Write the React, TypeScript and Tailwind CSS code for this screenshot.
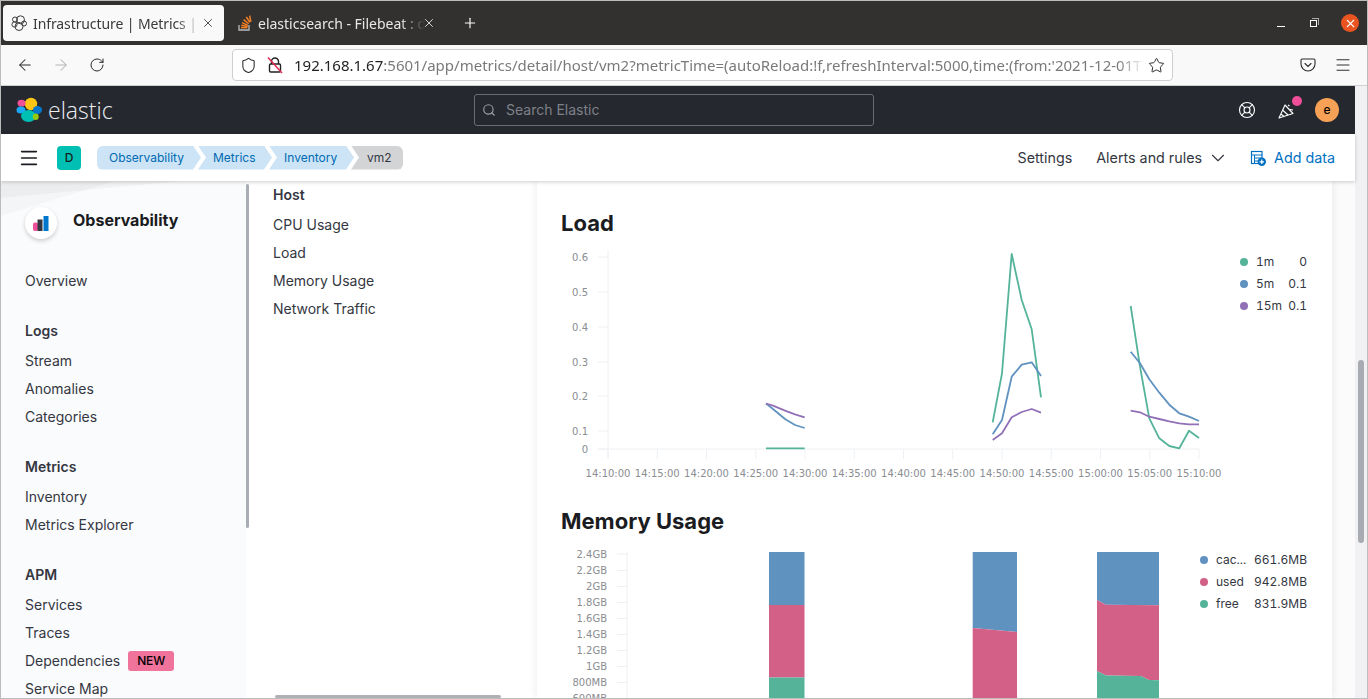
import React from "react";
import { ArrowLeft, ArrowRight, RotateCw, Shield, Star, Menu, Search, ChevronDown, LifeBuoy, Plus, X } from "lucide-react";

const green = "#54b399", blue = "#6092c0", purple = "#9170b8", pink = "#d36086";

const xLabels = ["14:10:00","14:15:00","14:20:00","14:25:00","14:30:00","14:35:00","14:40:00","14:45:00","14:50:00","14:55:00","15:00:00","15:05:00","15:10:00"];
const yLoad: [string, number][] = [["0.6",257],["0.5",292],["0.4",327],["0.3",362],["0.2",396],["0.1",431],["0",449]];
const yMem: [string, number][] = [["2.4GB",554],["2.2GB",570.5],["2GB",586.5],["1.8GB",602.5],["1.6GB",618.5],["1.4GB",634.5],["1.2GB",650.5],["1GB",666.5],["800MB",682.5],["600MB",698.5]];

const lines: [string, string][] = [
  [blue, "766,403.5 773,409 785,419 795,425 804.7,428"],
  [purple, "766,403.5 773,405.7 785,410.7 795,414.3 804.7,417.3"],
  [green, "766,448.3 804.7,448.3"],
  [green, "992.7,422.3 1002,373.3 1011.7,254 1021.7,300 1031.7,329.3 1041,397.3"],
  [blue, "992.7,434.3 1002,420 1011.7,376.7 1021.7,364.7 1031.7,362.3 1041,376"],
  [purple, "992.7,440 1002,433.3 1011.7,417.3 1021.7,412 1031.7,409 1041,412.7"],
  [green, "1130.7,306 1140,366.7 1149.3,418.3 1159.3,438.3 1169.3,446 1179.3,448.3 1189,430.7 1199,438"],
  [blue, "1130.7,351.7 1140,363.3 1149.3,379.3 1159.3,392.7 1169.3,404.7 1179.3,413.3 1189,416.7 1199,421"],
  [purple, "1130.7,410.7 1140,412.3 1149.3,416.7 1159.3,419 1169.3,421.3 1179.3,423.3 1189,424.3 1199,424.3"],
];

const areas: [string, string][] = [
  [blue, "769,552 804.5,552 804.5,605 769,605"],
  [pink, "769,605 804.5,605 804.5,677.5 769,677.5"],
  [green, "769,677.5 804.5,677.5 804.5,700 769,700"],
  [blue, "972.7,552 1017,552 1017,632 972.7,628"],
  [pink, "972.7,628 1017,632 1017,700 972.7,700"],
  [blue, "1097,552 1159,552 1159,605.3 1106,604.7 1097,600"],
  [pink, "1097,600 1106,604.7 1159,605.3 1159,680.3 1149,680 1141,676 1106,675.5 1097,671"],
  [green, "1097,671 1106,675.5 1141,676 1149,680 1159,680.3 1159,700 1097,700"],
];

function LoadChart() {
  const ticks = xLabels.map((_, i) => 608 + i * 49.25);
  return (
    <svg width={690} height={250} viewBox="537 240 690 250" className="block shrink-0">
      <line x1={608} y1={250} x2={608} y2={459} stroke="#eef0f3" strokeWidth={1} />
      {yLoad.map(([t, y]) => (
        <g key={t}>
          <line x1={598} x2={608} y1={y} y2={y} stroke="#eef0f3" />
          <text x={588} y={y + 3.5} textAnchor="end" fontSize={10} fill="#8a8d92" fontFamily="DejaVu Sans">{t}</text>
        </g>
      ))}
      <line x1={598} x2={1199} y1={449} y2={449} stroke="#eef0f3" />
      {ticks.map((x, i) => (
        <g key={i}>
          <line x1={x} x2={x} y1={449} y2={459} stroke="#eef0f3" />
          <text x={x} y={477} textAnchor="middle" fontSize={10} fill="#8a8d92" fontFamily="DejaVu Sans">{xLabels[i]}</text>
        </g>
      ))}
      {lines.map(([c, p], i) => (
        <polyline key={i} points={p} fill="none" stroke={c} strokeWidth={1.8} strokeLinejoin="round" />
      ))}
    </svg>
  );
}

function MemoryChart() {
  return (
    <svg width={660} height={158} viewBox="537 540 660 158" className="block shrink-0">
      <line x1={627} y1={552} x2={627} y2={700} stroke="#eef0f3" />
      {yMem.map(([t, y]) => (
        <g key={t}>
          <line x1={617} x2={627} y1={y} y2={y} stroke="#eef0f3" />
          <text x={607} y={y + 3.5} textAnchor="end" fontSize={10} fill="#8a8d92" fontFamily="DejaVu Sans">{t}</text>
        </g>
      ))}
      {areas.map(([c, p], i) => (
        <polygon key={i} points={p} fill={c} />
      ))}
    </svg>
  );
}

function Legend({ rows, className }: { rows: [string, string, string][]; className: string }) {
  return (
    <div className={className}>
      {rows.map(([c, l, v]) => (
        <div key={l} className="flex h-[22px] items-center text-xs tabular-nums text-[#343741]">
          <span className="h-2 w-2 shrink-0 rounded-full" style={{ backgroundColor: c }} />
          <span className="ml-2">{l}</span>
          <span className="ml-auto">{v}</span>
        </div>
      ))}
    </div>
  );
}

function NavGroup({ title, items }: { title?: string; items: string[] }) {
  return (
    <div className="mb-[22px]">
      {title && <div className="mb-[2px] flex h-[28px] items-center text-sm font-semibold text-[#343741]">{title}</div>}
      {items.map((i) => (
        <div key={i} className="flex h-[28px] items-center text-sm text-[#343741]">
          {i}
          {i === "Dependencies" && (
            <span className="ml-[8px] flex h-[20px] items-center rounded-[3px] bg-[#f0739b] px-[9px] text-xs font-medium tracking-[-0.2px] text-black">NEW</span>
          )}
        </div>
      ))}
    </div>
  );
}

function Crumb({ label, cls, text }: { label: string; cls: string; text: string }) {
  return <div className={`flex h-6 shrink-0 items-center text-xs ${cls} ${text}`}>{label}</div>;
}

function ElasticLogo() {
  return (
    <svg width={26} height={26} viewBox="0 0 26 26" className="shrink-0">
      <circle cx={15} cy={7} r={6.2} fill="#fec514" />
      <ellipse cx={5.5} cy={6.2} rx={4} ry={3.4} fill="#f04e98" />
      <ellipse cx={5} cy={13} rx={4.5} ry={3.6} fill="#1ba9f5" />
      <ellipse cx={12.5} cy={19} rx={7.5} ry={6} fill="#00bfb3" />
      <ellipse cx={21.5} cy={13} rx={4.6} ry={4} fill="#0077cc" />
      <ellipse cx={19.7} cy={19.8} rx={3} ry={3.2} fill="#93c90e" />
    </svg>
  );
}

function TabFavicon() {
  return (
    <svg width={16} height={16} viewBox="0 0 16 16" fill="none" stroke="#3b3b3b" strokeWidth={1} className="shrink-0">
      <circle cx={9.5} cy={4.8} r={4} />
      <circle cx={4} cy={4.5} r={2.5} />
      <circle cx={3.5} cy={9.5} r={2.6} />
      <circle cx={8} cy={11.5} r={4} />
      <circle cx={13} cy={8.5} r={2.5} />
    </svg>
  );
}

function StackIcon() {
  return (
    <svg width={14} height={16} viewBox="0 0 14 16" fill="none" className="shrink-0">
      <path d="M1 10v5h10v-5" stroke="#bcbbbb" strokeWidth={1.3} />
      <g stroke="#f48024" strokeWidth={1.5}>
        <path d="M3 12.6h6.4" />
        <path d="M3.3 10.2l6.3 1.3" />
        <path d="M4 7.6l5.9 2.8" />
        <path d="M5.6 4.6l5 4.2" />
        <path d="M8.3 2l3.6 5.2" />
        <path d="M11.7 0.6l1.1 6.2" />
      </g>
    </svg>
  );
}

function LockIcon() {
  return (
    <svg width={18} height={18} viewBox="0 0 18 18" fill="none" className="shrink-0">
      <path d="M5.5 8V5.5a3.5 3.5 0 0 1 7 0V8" stroke="#222" strokeWidth={1.4} />
      <rect x={3.5} y={8} width={11} height={8} rx={1.2} stroke="#222" strokeWidth={1.4} />
      <path d="M2 1.5L16 17" stroke="#e22850" strokeWidth={1.5} />
    </svg>
  );
}

function PocketIcon() {
  return (
    <svg width={16} height={16} viewBox="0 0 16 16" fill="none" stroke="#2b2b2b" strokeWidth={1.1} className="shrink-0">
      <path d="M2.2 2h11.6c.7 0 1.2.5 1.2 1.2V7a7 7 0 0 1-14 0V3.2C1 2.5 1.500 2 2.200 2z" />
      <path d="M5 6.500l3 3 3-3" strokeLinecap="round" />
    </svg>
  );
}

function CheerIcon() {
  return (
    <svg width={20} height={20} viewBox="0 0 20 20" fill="none" stroke="#fff" strokeWidth={1.1} className="shrink-0">
      <path d="M8 5L2 18l14-4.500z" strokeLinejoin="round" />
      <path d="M5.500 10l5.500 5M4 14l3 2.500M11 5l1.500 1M13 9.500l3 .5" />
    </svg>
  );
}

function AddDataIcon() {
  return (
    <svg width={16} height={16} viewBox="0 0 16 16" fill="none" className="shrink-0">
      <rect x={1.500} y={1.500} width={10.500} height={12} stroke="#0071c2" strokeWidth={1.200} />
      <path d="M1.500 5h10.500M4.500 5v8.500M4.500 8h7M4.500 11h4" stroke="#0071c2" strokeWidth={1} />
      <circle cx={11.800} cy={11.800} r={4.200} fill="#0071c2" />
      <path d="M11.800 9.600v4.400M9.600 11.800h4.400" stroke="#fff" strokeWidth={1.200} />
    </svg>
  );
}

function ObsIcon() {
  return (
    <svg width={16} height={16} viewBox="0 0 16 16" className="shrink-0">
      <rect x={0} y={7.500} width={5} height={8.500} rx={2} fill="#f04e98" />
      <rect x={4.500} y={4.500} width={5} height={11.500} fill="#343741" />
      <rect x={10.500} y={1} width={5} height={15} fill="#0077cc" />
    </svg>
  );
}

export default function App() {
  return (
    <div className="flex h-[699px] w-full flex-col overflow-hidden border border-[#bcbcbc] bg-white [font-family:Inter,sans-serif]">
      {/* browser tabs */}
      <div className="relative flex h-[44px] shrink-0 items-center bg-[#333130] pl-[2px] [font-family:'Noto_Sans',sans-serif] text-[14px]">
        <div className="flex h-[36px] w-[221px] shrink-0 items-center rounded-[4px] bg-[#f9f9fa] pl-[8px] text-[#3a3a3a]">
          <TabFavicon />
          <span className="ml-[6px] w-[168px] overflow-hidden whitespace-nowrap tracking-[-0.1px] [mask-image:linear-gradient(to_right,black_85%,transparent)]">Infrastructure | Metrics | vm2</span>
          <X size={14} strokeWidth={1.500} className="shrink-0" />
        </div>
        <div className="flex h-[36px] w-[228px] shrink-0 items-center pl-[14px] text-[#e8e8e8]">
          <StackIcon />
          <span className="ml-[6px] w-[167px] overflow-hidden whitespace-nowrap [mask-image:linear-gradient(to_right,white_85%,transparent)]">elasticsearch - Filebeat : data</span>
          <X size={14} strokeWidth={1.500} className="ml-[-3px] shrink-0 text-[#eee]" />
        </div>
        <Plus size={16} strokeWidth={1.700} className="ml-[10px] text-white" />
        <div className="ml-auto mr-[8px] flex items-center">
          <span className="h-[1px] w-[8px] translate-y-[3px] bg-white" />
          <span className="relative ml-[25px] h-[7px] w-[7px] border border-white">
            <span className="absolute left-[1px] top-[-3px] h-[7px] w-[7px] border-r border-t border-[#aaa]" />
          </span>
          <span className="ml-[24px] flex h-[18px] w-[18px] items-center justify-center rounded-full bg-[#e95420]">
            <X size={13} strokeWidth={2} className="text-white" />
          </span>
        </div>
      </div>
      {/* toolbar */}
      <div className="flex h-[41px] shrink-0 items-center border-b border-[#cfcfd0] bg-[#f9f9fa] text-[#2b2b2b]">
        <ArrowLeft size={18} strokeWidth={1.400} className="ml-[15px] shrink-0" />
        <ArrowRight size={18} strokeWidth={1.400} className="ml-[18px] shrink-0 text-[#b5b5b5]" />
        <RotateCw size={16} strokeWidth={1.500} className="ml-[19px] shrink-0" />
        <div className="ml-[127px] flex h-[32px] w-[941px] shrink-0 items-center rounded-[4px] border border-[#cfcfd0] bg-white pl-[6px]">
          <Shield size={17} strokeWidth={1.500} className="ml-[1px] shrink-0" />
          <div className="ml-[9px]"><LockIcon /></div>
          <div className="ml-[10px] w-[850px] shrink-0 overflow-hidden whitespace-nowrap text-[15px] text-[#7a7a7a] [font-family:'Noto_Sans',sans-serif] [mask-image:linear-gradient(to_right,black_97%,transparent)]">
            <span className="text-[#222]">192.168.1.67</span>:5601/app/metrics/detail/host/vm2?metricTime=(autoReload:!f,refreshInterval:5000,time:(from:'2021-12-01T
          </div>
          <Star size={17} strokeWidth={1.400} className="ml-[4px] shrink-0" />
        </div>
        <div className="ml-[127px]"><PocketIcon /></div>
        <Menu size={18} strokeWidth={1.300} className="ml-[18px]" />
      </div>
      {/* page */}
      <div className="flex min-h-0 flex-1">
        <div className="flex min-w-0 flex-1 flex-col">
          {/* elastic header */}
          <div className="relative flex h-[48px] shrink-0 items-center bg-[#25282f] pl-[15px] text-white">
            <ElasticLogo />
            <span className="ml-[6px] w-[65px] text-[23px] font-light leading-none text-[#eceef1] [font-family:'Open_Sans',sans-serif]">elastic</span>
            <div className="ml-[361px] flex h-[32px] w-[400px] items-center rounded-[3px] border border-[#696c72] pl-[7px] text-sm text-[#7e8187]">
              <Search size={14} className="text-[#9a9da3]" />
              <span className="ml-[10px]">Search Elastic</span>
            </div>
            <LifeBuoy size={18} strokeWidth={1.500} className="ml-[364px]" />
            <div className="relative ml-[21px]">
              <CheerIcon />
              <span className="absolute right-[-5px] top-[-4px] h-[10px] w-[10px] rounded-full bg-[#f04e98]" />
            </div>
            <span className="ml-[18px] flex h-6 w-6 items-center justify-center rounded-full bg-[#f6a156] text-xs font-medium text-black">e</span>
          </div>
          {/* breadcrumbs */}
          <div className="relative z-20 flex h-[47px] shrink-0 items-center bg-white pl-[17px] shadow-[0_1px_4px_rgba(0,0,0,0.2)]">
            <Menu size={22} strokeWidth={1.800} className="text-[#1a1c21]" />
            <div className="ml-[17px] flex h-6 w-6 items-center justify-center rounded-[4px] bg-[#00bfb3] text-xs font-medium text-[#1a1c21]">D</div>
            <div className="ml-[16px] flex">
              <Crumb label="Observability" text="text-[#006bb4]" cls="w-[104px] bg-[#cce4f5] pl-[12px] rounded-l-[6px] [clip-path:polygon(0_0,96px_0,104px_50%,96px_100%,0_100%)]" />
              <Crumb label="Metrics" text="text-[#006bb4]" cls="ml-[-3px] w-[74px] bg-[#cce4f5] pl-[15px] [clip-path:polygon(0_0,66px_0,74px_50%,66px_100%,0_100%,8px_50%)]" />
              <Crumb label="Inventory" text="text-[#006bb4]" cls="ml-[-3px] w-[85px] bg-[#cce4f5] pl-[15px] [clip-path:polygon(0_0,77px_0,85px_50%,77px_100%,0_100%,8px_50%)]" />
              <Crumb label="vm2" text="text-[#343741]" cls="ml-[-3px] w-[52px] rounded-r-[6px] bg-[#d3d4d6] pl-[16px] [clip-path:polygon(0_0,100%_0,100%_100%,0_100%,8px_50%)]" />
            </div>
            <div className="ml-auto flex items-center pr-[20px] text-[14.3px] text-[#343741]">
              <span>Settings</span>
              <span className="ml-[24px]">Alerts and rules</span>
              <ChevronDown size={22} strokeWidth={1.200} className="ml-[5px]" />
              <div className="ml-[21px]"><AddDataIcon /></div>
              <span className="ml-[8px] text-[#0071c2]">Add data</span>
            </div>
          </div>
          {/* body */}
          <div className="flex min-h-0 flex-1 overflow-hidden bg-[#fbfbfc]">
            <aside className="relative z-0 w-[245px] shrink-0 overflow-hidden bg-[#fafbfd] pl-[24px]">
              <svg width={245} height={50} viewBox="0 0 245 50" className="absolute left-0 top-0">
                <polygon points="0,0 180,0 0,17" fill="#000" fillOpacity={0.03} />
                <polygon points="0,0 114,0 0,35" fill="#000" fillOpacity={0.025} />
              </svg>
              <div className="relative flex items-center pt-[26px]">
                <div className="flex h-8 w-8 items-center justify-center rounded-full bg-white shadow-[0_2px_4px_rgba(0,0,0,0.18)]"><ObsIcon /></div>
                <span className="ml-4 pb-[7px] text-base font-bold text-[#1a1c21]">Observability</span>
              </div>
              <div className="relative mt-[28px]">
                <NavGroup items={["Overview"]} />
                <NavGroup title="Logs" items={["Stream", "Anomalies", "Categories"]} />
                <NavGroup title="Metrics" items={["Inventory", "Metrics Explorer"]} />
                <NavGroup title="APM" items={["Services", "Traces", "Dependencies", "Service Map"]} />
              </div>
            </aside>
            <div className="relative w-[291px] shrink-0 bg-white pl-[27px]">
              <span className="absolute left-0 top-[3px] h-[344px] w-[3px] rounded-full bg-[#a9adb4]" />
              <div className="flex h-[28px] items-center text-sm font-semibold text-[#343741]">Host</div>
              <div className="mt-[2px]">
                {["CPU Usage", "Load", "Memory Usage", "Network Traffic"].map((t) => (
                  <div key={t} className="flex h-[28px] items-center text-sm text-[#343741]">{t}</div>
                ))}
              </div>
              <span className="absolute bottom-0 left-[29px] h-[3px] w-[226px] rounded-full bg-[#aeb1b6]" />
            </div>
            <main className="relative z-10 w-[795px] shrink-0 bg-white shadow-[0_0_9px_rgba(0,0,0,0.09)]">
              <div className="flex h-[59px] items-end pb-[3px] pl-[24px]">
                <h2 className="text-[22px] font-bold leading-7 text-[#1a1c21]">Load</h2>
              </div>
              <div className="flex h-[250px]">
                <LoadChart />
                <Legend className="ml-[13px] w-[67px] pt-[11px]" rows={[[green, "1m", "0"], [blue, "5m", "0.1"], [purple, "15m", "0.1"]]} />
              </div>
              <div className="flex h-[50px] items-end pb-[5px] pl-[24px]">
                <h2 className="text-[22px] font-bold leading-7 text-[#1a1c21]">Memory Usage</h2>
              </div>
              <div className="flex">
                <MemoryChart />
                <Legend className="ml-[3px] w-[107px] pt-[9px]" rows={[[blue, "cac...", "661.6MB"], [pink, "used", "942.8MB"], [green, "free", "831.9MB"]]} />
              </div>
            </main>
          </div>
        </div>
        {/* page scrollbar */}
        <div className="relative w-[12px] shrink-0 bg-[#f1f1f3]">
          <span className="absolute left-[3px] top-[274px] h-[183px] w-[6px] rounded-full bg-[#a9abb3]" />
        </div>
      </div>
    </div>
  );
}
